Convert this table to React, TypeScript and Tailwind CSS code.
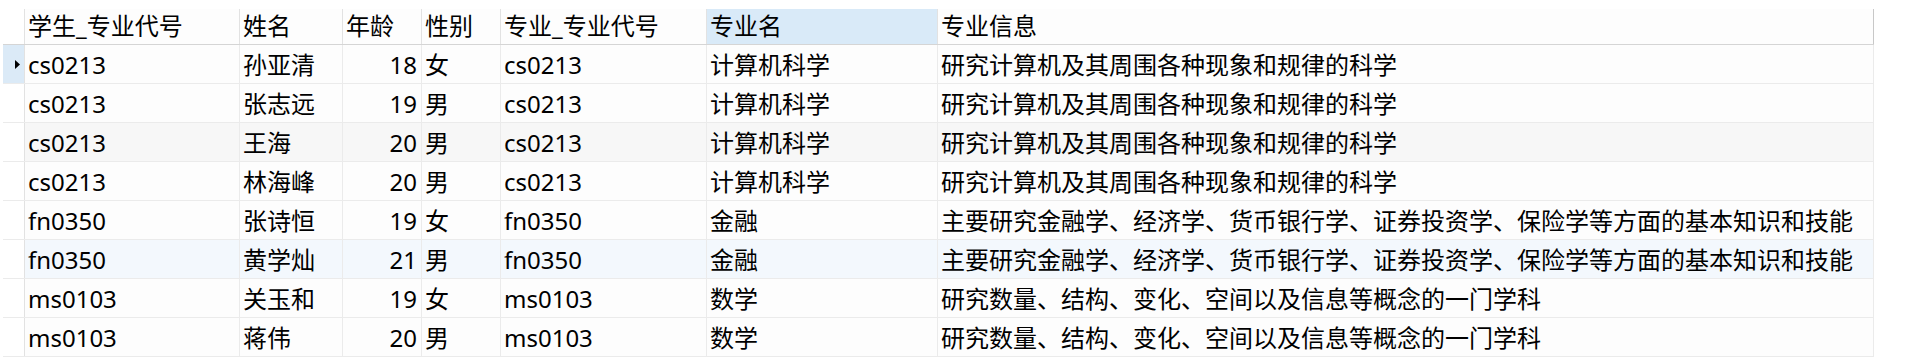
import React from 'react';

const columns = [
  { key: 'sid', title: '学生_专业代号', width: 'w-[215px]' },
  { key: 'name', title: '姓名', width: 'w-[103px]' },
  { key: 'age', title: '年龄', width: 'w-[79px]', right: true },
  { key: 'sex', title: '性别', width: 'w-[79px]' },
  { key: 'mid', title: '专业_专业代号', width: 'w-[206px]' },
  { key: 'mname', title: '专业名', width: 'w-[231px]', selected: true },
  { key: 'info', title: '专业信息', width: 'w-[936px]' },
];

const csInfo = '研究计算机及其周围各种现象和规律的科学';
const fnInfo = '主要研究金融学、经济学、货币银行学、证券投资学、保险学等方面的基本知识和技能';
const msInfo = '研究数量、结构、变化、空间以及信息等概念的一门学科';

const rows = [
  ['cs0213', '孙亚清', '18', '女', 'cs0213', '计算机科学', csInfo],
  ['cs0213', '张志远', '19', '男', 'cs0213', '计算机科学', csInfo],
  ['cs0213', '王海', '20', '男', 'cs0213', '计算机科学', csInfo],
  ['cs0213', '林海峰', '20', '男', 'cs0213', '计算机科学', csInfo],
  ['fn0350', '张诗恒', '19', '女', 'fn0350', '金融', fnInfo],
  ['fn0350', '黄学灿', '21', '男', 'fn0350', '金融', fnInfo],
  ['ms0103', '关玉和', '19', '女', 'ms0103', '数学', msInfo],
  ['ms0103', '蒋伟', '20', '男', 'ms0103', '数学', msInfo],
];

export default function App() {
  return (
    <div
      className="w-[1930px] h-[364px] bg-white text-black text-[24px] leading-none"
      style={{ fontFamily: '"Noto Sans", "Noto Sans CJK SC", sans-serif' }}
    >
      <div className="pt-[9px] pl-[3px]">
        {/* header */}
        <div className="flex h-[36px] border-b border-[#d5d5d5] w-[1871px]">
          <div className="w-[22px] border-r border-[#e2e2e2]" />
          {columns.map((c, i) => (
            <div
              key={c.key}
              className={`${c.width} flex items-center pl-[3px] pb-[1px] border-r ${
                i === columns.length - 1 ? 'border-[#c8c8c8]' : 'border-[#e2e2e2]'
              } ${c.selected ? 'bg-[#d9eaf8]' : 'bg-[#fdfdfd]'}`}
            >
              {c.title}
            </div>
          ))}
        </div>

        {/* body */}
        {rows.map((r, ri) => {
          const bg = ri === 2 ? 'bg-[#f7f7f7]' : ri === 5 ? 'bg-[#f3f8fd]' : 'bg-[#fdfdfd]';
          return (
            <div key={ri} className={`flex h-[39px] border-b border-[#ebebeb] w-[1871px] ${bg}`}>
              <div
                className={`w-[22px] border-r border-[#e2e2e2] flex items-center justify-end pr-[4px] ${
                  ri === 0 ? 'bg-[#dbeaf7]' : 'bg-white'
                }`}
              >
                {ri === 0 && (
                  <svg width="5" height="9" viewBox="0 0 5 9">
                    <path d="M0 0 L5 4.5 L0 9 Z" fill="#000" />
                  </svg>
                )}
              </div>
              {columns.map((c, ci) => (
                <div
                  key={c.key}
                  className={`${c.width} flex items-center pl-[3px] pt-[1px] border-r border-[#ebebeb] whitespace-nowrap overflow-hidden ${
                    c.right ? 'justify-end pr-[4px]' : ''
                  }`}
                >
                  {r[ci]}
                </div>
              ))}
            </div>
          );
        })}
      </div>
    </div>
  );
}
